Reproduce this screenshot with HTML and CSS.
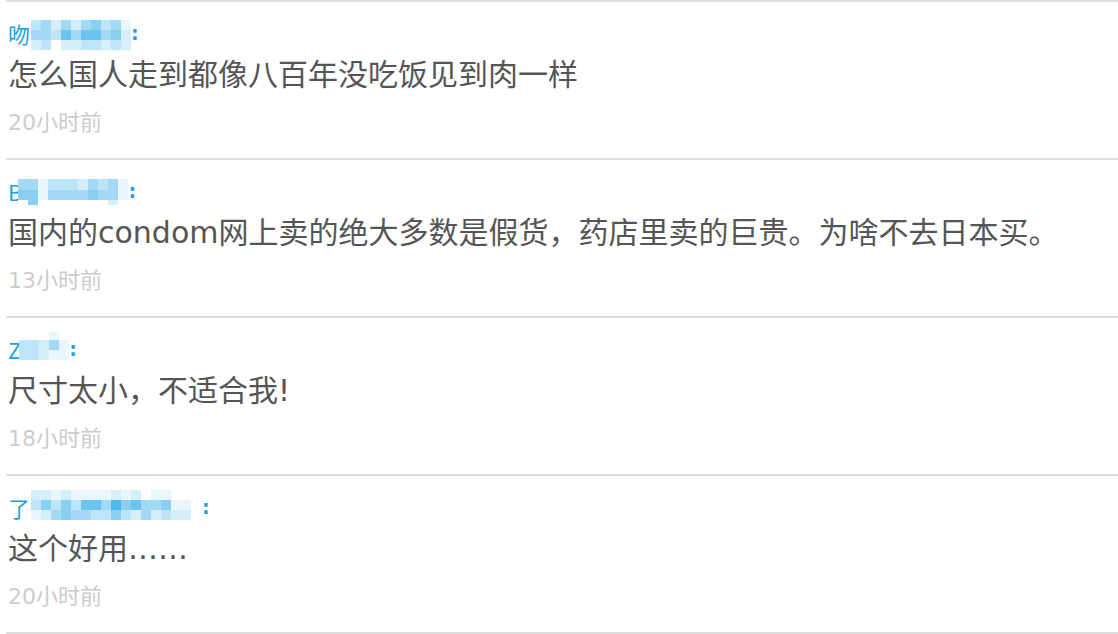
FILE: index.html
```html
<!doctype html>
<html>
<head>
<meta charset="utf-8" />
<title>评论</title>
<link rel="stylesheet" href="styles.css">
</head>
<body>
<ul class="comments">
	<li class="item">
		<div class="who">
			<span class="nick">吻</span>
			<span class="mosaic m1">
				<i class="c3"></i><i class="c4"></i><i class="c2"></i><i class="c4"></i><i class="c2"></i><i class="c4"></i><i class="c5"></i><i class="c3"></i><i class="c4"></i><i class="c1"></i>
				<i class="c4"></i><i class="c4"></i><i class="c3"></i><i class="c6"></i><i class="c4"></i><i class="c6"></i><i class="c6"></i><i class="c4"></i><i class="c5"></i><i class="c2"></i>
				<i class="c2"></i><i class="c3"></i><i class="c0"></i><i class="c2"></i><i class="c2"></i><i class="c3"></i><i class="c3"></i><i class="c2"></i><i class="c3"></i><i class="c2"></i>
			</span>
			<span class="colon">:</span>
		</div>
		<p class="text">怎么国人走到都像八百年没吃饭见到肉一样</p>
		<p class="time">20小时前</p>
	</li>
	<li class="item">
		<div class="who">
			<span class="nick">B</span>
			<span class="mosaic m2">
				<i class="c4"></i><i class="c4"></i><i class="c1"></i><i class="c3"></i><i class="c3"></i><i class="c3"></i><i class="c2"></i><i class="c4"></i><i class="c3"></i><i class="c4"></i><i class="c1"></i>
				<i class="c5"></i><i class="c5"></i><i class="c1"></i><i class="c4"></i><i class="c4"></i><i class="c4"></i><i class="c4"></i><i class="c5"></i><i class="c4"></i><i class="c4"></i><i class="c1"></i>
				<i class="c0"></i><i class="c5"></i><i class="c0"></i><i class="c0"></i><i class="c0"></i><i class="c0"></i><i class="c0"></i><i class="c0"></i><i class="c0"></i><i class="c2"></i><i class="c0"></i>
			</span>
			<span class="colon">:</span>
		</div>
		<p class="text">国内的condom网上卖的绝大多数是假货，药店里卖的巨贵。为啥不去日本买。</p>
		<p class="time">13小时前</p>
	</li>
	<li class="item">
		<div class="who">
			<span class="nick">Z</span>
			<span class="mosaic m3">
				<i class="c0"></i><i class="c0"></i><i class="c0"></i><i class="c1"></i><i class="c0"></i>
				<i class="c3"></i><i class="c3"></i><i class="c2"></i><i class="c4"></i><i class="c1"></i>
				<i class="c3"></i><i class="c3"></i><i class="c2"></i><i class="c1"></i><i class="c1"></i>
			</span>
			<span class="colon">:</span>
		</div>
		<p class="text">尺寸太小，不适合我!</p>
		<p class="time">18小时前</p>
	</li>
	<li class="item">
		<div class="who">
			<span class="nick">了</span>
			<span class="mosaic m4">
				<i class="c2"></i><i class="c2"></i><i class="c1"></i><i class="c2"></i><i class="c1"></i><i class="c1"></i><i class="c1"></i><i class="c1"></i><i class="c2"></i><i class="c1"></i><i class="c2"></i><i class="c0"></i><i class="c1"></i><i class="c1"></i><i class="c0"></i><i class="c0"></i>
				<i class="c3"></i><i class="c5"></i><i class="c3"></i><i class="c5"></i><i class="c3"></i><i class="c6"></i><i class="c6"></i><i class="c4"></i><i class="c7"></i><i class="c5"></i><i class="c6"></i><i class="c4"></i><i class="c4"></i><i class="c5"></i><i class="c1"></i><i class="c1"></i>
				<i class="c1"></i><i class="c2"></i><i class="c4"></i><i class="c5"></i><i class="c4"></i><i class="c4"></i><i class="c3"></i><i class="c3"></i><i class="c5"></i><i class="c3"></i><i class="c2"></i><i class="c4"></i><i class="c2"></i><i class="c3"></i><i class="c2"></i><i class="c2"></i>
			</span>
			<span class="colon wide">:</span>
		</div>
		<p class="text">这个好用……</p>
		<p class="time">20小时前</p>
	</li>
</ul>
</body>
</html>
```

FILE: styles.css
```css
*{margin: 0;padding: 0;}
body{background: #fff;font-family: "DejaVu Sans","Noto Sans CJK SC",sans-serif;}
.comments{list-style: none;margin-left: 6px;border-top: 2px solid #ddd;}
.item{padding: 18px 0 20px 2px;border-bottom: 2px solid #ddd;}
.who{display: flex;align-items: flex-start;height: 30px;color: #1ba1e2;font-size: 22px;line-height: 26px;}
.nick{font-family: "Noto Sans CJK SC",sans-serif;}
.colon{margin-left: 0;font-size: 19px;font-weight: bold;}
.colon.wide{margin-left: 11px;}
.mosaic{display: grid;grid-auto-rows: 10px;}
.mosaic i{display: block;}
.m1{grid-template-columns: repeat(10,10px);margin-left: 1px;}
.m2{grid-template-columns: repeat(11,10px);grid-template-rows: 11px 10px 5px;margin-left: -4px;margin-top: 1px;}
.m3{grid-template-columns: repeat(5,10px);grid-template-rows: 8px 10px 10px;margin-left: -2px;margin-top: -4px;}
.m4{grid-template-columns: repeat(16,10px);margin-left: 1px;margin-top: -4px;}
.c0{background: #fff;}
.c1{background: #eaf6fd;}
.c2{background: #d4eefa;}
.c3{background: #bde4f8;}
.c4{background: #a3d9f4;}
.c5{background: #88cff2;}
.c6{background: #6bc4ee;}
.c7{background: #4cb8eb;}
.text{margin-top: 5px;font-size: 30px;line-height: 40px;color: #555;}
.time{margin-top: 13px;font-size: 22px;line-height: 30px;color: #ccc;}
```
